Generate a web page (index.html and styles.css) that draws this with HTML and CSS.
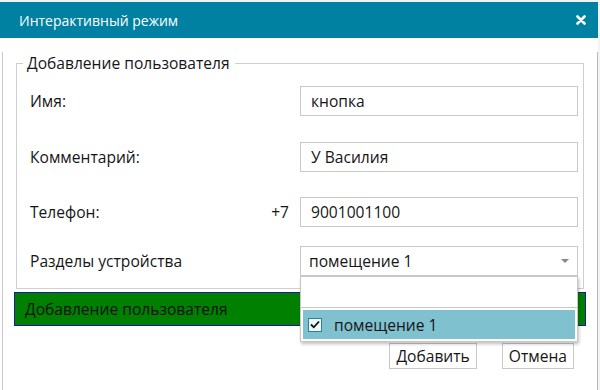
FILE: index.html
```html
<!DOCTYPE html>
<html lang="ru">
<head>
    <meta charset="UTF-8">
    <title>Интерактивный режим</title>
    <link rel="stylesheet" href="styles.css">
</head>
<body>
    <div class="dialog">
        <div class="titlebar">
            <span class="title">Интерактивный режим</span>
            <svg class="close" width="10" height="10" viewBox="0 0 10 10"><path d="M1.5 1.5 L8.5 8.5 M8.5 1.5 L1.5 8.5" stroke="#fff" stroke-width="2.6" stroke-linecap="round"/></svg>
        </div>
        <div class="dialog-body">
            <fieldset class="user-form">
                <legend>Добавление пользователя</legend>

                <div class="row row-name">
                    <label for="name">Имя:</label>
                    <input type="text" id="name" value="кнопка">
                </div>

                <div class="row row-comment">
                    <label for="comment">Комментарий:</label>
                    <input type="text" id="comment" value="У Василия">
                </div>

                <div class="row row-phone">
                    <label for="phone">Телефон:</label>
                    <span class="prefix">+7</span>
                    <input type="text" id="phone" value="9001001100">
                </div>

                <div class="row row-sections">
                    <label>Разделы устройства</label>
                    <div class="select">
                        <span class="select-value">помещение 1</span>
                        <span class="arrow"></span>
                        <div class="dropdown">
                            <div class="dropdown-search"></div>
                            <div class="dropdown-list">
                                <div class="option selected">
                                    <span class="check">
                                        <svg width="10" height="9" viewBox="0 0 10 9"><path d="M1 4.5 L3.8 7.3 L9 1.5" fill="none" stroke="#111" stroke-width="1.8"/></svg>
                                    </span>
                                    помещение 1
                                </div>
                            </div>
                        </div>
                    </div>
                </div>
            </fieldset>

            <div class="status">Добавление пользователя</div>

            <div class="buttons">
                <button type="button" class="add">Добавить</button>
                <button type="button" class="cancel">Отмена</button>
            </div>
        </div>
    </div>
</body>
</html>
```

FILE: styles.css
```css
body {
    font-family: 'Open Sans', 'Noto Sans', sans-serif;
    font-size: 15.6px;
    color: #161616;
    background: #f3f3f3;
    margin: 0;
    padding: 0;
}
.dialog {
    width: 598px;
    margin-top: 2px;
    background: #fff;
    height: 388px;
}
.titlebar {
    background: #0081a1;
    color: #fff;
    height: 36px;
    display: flex;
    align-items: center;
    justify-content: space-between;
    padding: 0 12px 0 19px;
}
.title {
    font-size: 14px;
}
.dialog-body {
    margin-left: 2px;
    border-left: 1px solid #c8c8c8;
    border-right: 1px solid #b8b8b8;
    height: 352px;
    box-sizing: border-box;
}
.user-form {
    margin: 14px 13px 0 13px;
    padding: 12px 5px 12px 13px;
    border: 1px solid #cfcfcf;
}
.user-form legend {
    margin-left: -7px;
    padding: 0 5px 0 4px;
}
.row {
    display: flex;
    align-items: center;
    height: 30px;
}
.row label {
    flex: 1;
}
.row-comment {
    margin-top: 26px;
}
.row-phone {
    margin-top: 25px;
}
.row-sections {
    margin-top: 19px;
}
.prefix {
    margin-right: 11px;
}
.row input {
    width: 278px;
    height: 30px;
    box-sizing: border-box;
    border: 1px solid #c8c8c8;
    padding: 0 10px;
    font-family: inherit;
    font-size: 15.6px;
    color: #161616;
}
.select {
    position: relative;
    width: 278px;
    height: 30px;
    box-sizing: border-box;
    border: 1px solid #c8c8c8;
    display: flex;
    align-items: center;
    padding: 0 8px;
}
.select-value {
    flex: 1;
}
.arrow {
    width: 0;
    height: 0;
    border-left: 4px solid transparent;
    border-right: 4px solid transparent;
    border-top: 4px solid #888;
}
.dropdown {
    position: absolute;
    top: 29px;
    left: -1px;
    width: 278px;
    background: #fff;
    border: 1px solid #c8c8c8;
    box-sizing: border-box;
    box-shadow: 1px 2px 3px rgba(0, 0, 0, 0.25);
    z-index: 2;
}
.dropdown-search {
    height: 30px;
    border-bottom: 1px solid #c8c8c8;
}
.dropdown-list {
    padding: 2px;
}
.option {
    height: 29px;
    display: flex;
    align-items: center;
    padding-left: 5px;
}
.option.selected {
    background: #7fc1cf;
}
.check {
    width: 12px;
    height: 12px;
    border: 1px solid #2f7e9c;
    background: #eef6f8;
    display: flex;
    align-items: center;
    justify-content: center;
    margin-right: 12px;
}
.status {
    margin: 3px 11px 0 11px;
    height: 34px;
    box-sizing: border-box;
    background: #008000;
    border: 1px solid #1a1a9c;
    display: flex;
    align-items: center;
    padding-left: 10px;
    color: #111;
}
.buttons {
    display: flex;
    justify-content: flex-end;
    gap: 25px;
    margin-top: 17px;
    padding-right: 23px;
}
.buttons button {
    height: 26px;
    background: #fff;
    border: 1px solid #c8c8c8;
    font-family: inherit;
    font-size: 15.6px;
    color: #161616;
    padding: 0 6px;
}
```
